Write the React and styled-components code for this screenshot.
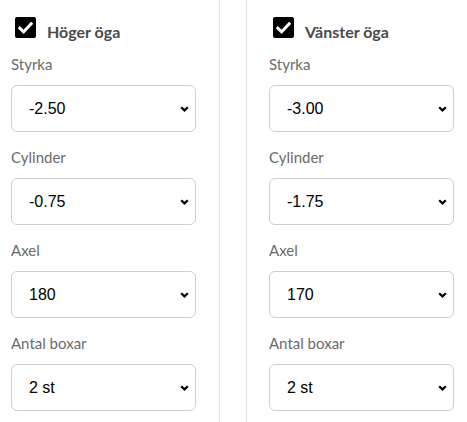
import React from 'react';
import styled, { createGlobalStyle } from 'styled-components';

const GlobalStyle = createGlobalStyle`
  body {
    margin: 0;
    background: #fff;
    font-family: Lato, "Noto Sans", sans-serif;
  }
`;

const Page = styled.div`
  display: flex;
  padding-left: 11px;
`;

const Column = styled.section`
  width: 185px;
  height: 420px;
  padding-top: 17px;
  box-sizing: content-box;
  ${(p) => (p.side === 'left'
    ? 'padding-right: 23px; border-right: 1px solid #e3e3e3;'
    : 'margin-left: 26px; padding-left: 22px; border-left: 1px solid #e3e3e3;')}
`;

const Heading = styled.label`
  display: flex;
  align-items: flex-start;
  gap: 11px;
  padding-left: 4px;
  margin-bottom: 12px;
  font-size: 16px;
  font-weight: 700;
  color: #4a4a4a;
  line-height: 20px;
`;

const HeadingText = styled.span`
  padding-top: 5px;
`;

const Check = styled.span`
  width: 21px;
  height: 21px;
  border-radius: 2px;
  background: #000;
  display: flex;
  align-items: center;
  justify-content: center;
  flex-shrink: 0;
`;

const Field = styled.div`
  margin-bottom: 15px;
`;

const Label = styled.div`
  font-size: 15px;
  line-height: 20px;
  color: #6b6b6b;
  margin-bottom: 11px;
`;

const SelectWrap = styled.div`
  position: relative;
`;

const Select = styled.select`
  appearance: none;
  -webkit-appearance: none;
  display: block;
  width: 185px;
  height: 47px;
  padding: 0 30px 0 17px;
  border: 1px solid #cfcfcf;
  border-radius: 6px;
  background: #fff;
  font-family: "Liberation Sans", Arial, sans-serif;
  font-size: 16px;
  color: #000;
  outline: none;
`;

const Chevron = styled.svg`
  position: absolute;
  right: 7px;
  top: 50%;
  margin-top: -3px;
  pointer-events: none;
`;

const eyes = [
  { side: 'left', title: 'Höger öga', values: ['-2.50', '-0.75', '180', '2 st'] },
  { side: 'right', title: 'Vänster öga', values: ['-3.00', '-1.75', '170', '2 st'] },
];

const labels = ['Styrka', 'Cylinder', 'Axel', 'Antal boxar'];

const CheckMark = () => (
  <Check>
    <svg width="15" height="12" viewBox="0 0 15 12">
      <path d="M1.8 6.2 L5.6 9.8 L13.2 1.8" fill="none" stroke="#fff" strokeWidth="3" strokeLinecap="square" />
    </svg>
  </Check>
);

const App = () => (
  <>
    <GlobalStyle />
    <Page>
      {eyes.map((eye) => (
        <Column key={eye.side} side={eye.side}>
          <Heading>
            <CheckMark />
            <HeadingText>{eye.title}</HeadingText>
          </Heading>
          {labels.map((label, i) => (
            <Field key={label}>
              <Label>{label}</Label>
              <SelectWrap>
                <Select defaultValue={eye.values[i]}>
                  <option>{eye.values[i]}</option>
                </Select>
                <Chevron width="9" height="6" viewBox="0 0 9 6">
                  <path d="M1.2 1.2 L4.5 4.4 L7.8 1.2" fill="none" stroke="#000" strokeWidth="2.2" />
                </Chevron>
              </SelectWrap>
            </Field>
          ))}
        </Column>
      ))}
    </Page>
  </>
);

export default App;
